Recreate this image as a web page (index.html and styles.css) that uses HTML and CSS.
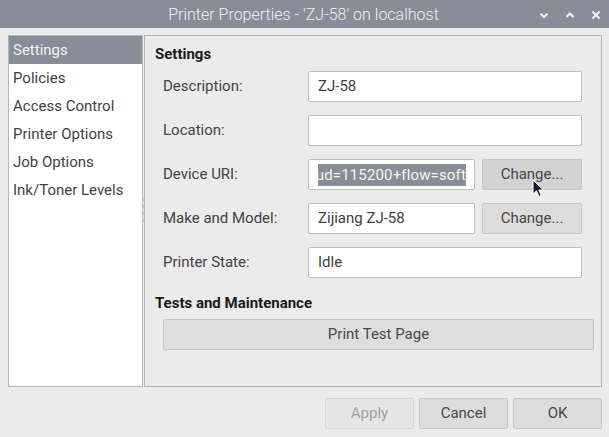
FILE: index.html
```html
<!DOCTYPE html>
<html>
<head>
<meta charset="utf-8">
<link rel="stylesheet" href="styles.css">
</head>
<body>
<div class="window">
  <div class="titlebar">
    <div class="title">Printer Properties - 'ZJ-58' on localhost</div>
    <div class="wm">
      <svg width="10" height="8" viewBox="0 0 10 8"><path d="M1.5 2.5 L5 6 L8.5 2.5" fill="none" stroke="#f4f4f4" stroke-width="2"/></svg>
      <svg width="10" height="8" viewBox="0 0 10 8"><path d="M1.5 6 L5 2.5 L8.5 6" fill="none" stroke="#f4f4f4" stroke-width="2"/></svg>
      <svg width="10" height="10" viewBox="0 0 10 10"><path d="M1.5 1.5 L8.5 8.5 M8.5 1.5 L1.5 8.5" fill="none" stroke="#f4f4f4" stroke-width="2"/></svg>
    </div>
  </div>
  <div class="main">
    <ul class="sidebar">
      <li class="selected">Settings</li>
      <li>Policies</li>
      <li>Access Control</li>
      <li>Printer Options</li>
      <li>Job Options</li>
      <li>Ink/Toner Levels</li>
    </ul>
    <div class="splitter"></div>
    <div class="panel">
      <div class="heading">Settings</div>
      <div class="form">
        <div class="label">Description:</div>
        <div class="field wide">ZJ-58</div>
        <div class="label">Location:</div>
        <div class="field wide"></div>
        <div class="label">Device URI:</div>
        <div class="field uri"><div class="clip"><span class="sel">ud=115200+flow=soft</span></div></div>
        <div class="btn hover">Change...</div>
        <div class="label">Make and Model:</div>
        <div class="field">Zijiang ZJ-58</div>
        <div class="btn">Change...</div>
        <div class="label">Printer State:</div>
        <div class="field wide">Idle</div>
      </div>
      <div class="heading tests">Tests and Maintenance</div>
      <div class="btn testpage">Print Test Page</div>
    </div>
  </div>
  <div class="footer">
    <div class="btn fbtn disabled">Apply</div>
    <div class="btn fbtn">Cancel</div>
    <div class="btn fbtn">OK</div>
  </div>
  <svg class="cursor" width="14" height="20" viewBox="0 0 14 20"><path d="M1 1 L1 15 L4.5 11.8 L7 17.5 L9.3 16.5 L6.8 11 L11.5 11 Z" fill="#1a1d2a" stroke="#ffffff" stroke-width="1"/></svg>
</div>
</body>
</html>
```
FILE: styles.css
```css
* { box-sizing: border-box; }
html, body { margin: 0; padding: 0; }
body {
  width: 609px;
  height: 437px;
  background: #ebebeb;
  font-family: Roboto, "Liberation Sans", sans-serif;
  font-size: 15px;
  color: #424242;
  overflow: hidden;
}
.window { position: relative; width: 609px; height: 437px; }
.titlebar {
  height: 28px;
  background: #878e97;
  position: relative;
  display: flex;
  align-items: center;
  justify-content: center;
}
.title {
  color: #eef0f2;
  font-weight: 300;
  font-size: 16px;
  margin-left: -2px;
}
.wm {
  position: absolute;
  right: 8px;
  top: 10px;
  display: flex;
  gap: 16px;
  align-items: center;
}
.main {
  display: flex;
  margin: 7px 7px 0 8px;
  height: 352px;
}
.sidebar {
  list-style: none;
  margin: 0;
  padding: 0;
  width: 135px;
  background: #ffffff;
  border: 1px solid #b6b6b6;
}
.sidebar li {
  height: 28px;
  line-height: 28px;
  padding-left: 4px;
  color: #424242;
  white-space: nowrap;
}
.sidebar li.selected {
  background: #878e97;
  color: #f2f2f2;
}
.splitter {
  width: 1px;
  background: linear-gradient(#ebebeb 0 163px, #c8c8c8 163px 166px, #ebebeb 166px 170px, #c8c8c8 170px 173px, #ebebeb 173px 177px, #c8c8c8 177px 180px, #ebebeb 180px 184px, #c8c8c8 184px 187px, #ebebeb 187px);
}
.panel {
  flex: 1;
  border: 1px solid #b6b6b6;
  padding: 7px 7px 0 10px;
}
.heading {
  font-weight: 700;
  color: #1a1a1a;
  line-height: 22px;
}
.form {
  margin: 6px 0 0 8px;
  display: grid;
  grid-template-columns: 138px 167px 100px;
  column-gap: 7px;
  row-gap: 13px;
}
.label {
  line-height: 31px;
  height: 31px;
  color: #444444;
}
.field {
  height: 31px;
  background: #ffffff;
  border: 1px solid #bdbdbd;
  border-radius: 2px;
  padding: 0 9px;
  line-height: 29px;
  color: #404040;
  white-space: nowrap;
  overflow: hidden;
}
.field.wide { grid-column: 2 / 4; }
.field.uri {
  display: flex;
  align-items: center;
  padding: 0 8px 0 9px;
}
.clip {
  flex: 1;
  min-width: 0;
  display: flex;
  justify-content: flex-end;
  overflow: hidden;
  background: #878e97;
}
.sel {
  background: #878e97;
  color: #f4f4f4;
  line-height: 22px;
  flex: none;
  letter-spacing: 0.15px;
}
.btn {
  height: 31px;
  background: #dcdcdc;
  border: 1px solid #c6c6c6;
  border-radius: 2px;
  text-align: center;
  line-height: 29px;
  color: #484848;
}
.btn.hover { background: #d2d2d2; }
.tests { margin-top: 14px; }
.testpage {
  margin: 5px 0 0 8px;
  background: #dedede;
}
.footer {
  display: flex;
  justify-content: flex-end;
  gap: 5px;
  margin: 11px 7px 0 0;
}
.fbtn { width: 89px; }
.fbtn.disabled {
  background: #e6e6e6;
  border-color: #d6d6d6;
  color: #a2a2a2;
}
.cursor {
  position: absolute;
  left: 532px;
  top: 179px;
}
```
